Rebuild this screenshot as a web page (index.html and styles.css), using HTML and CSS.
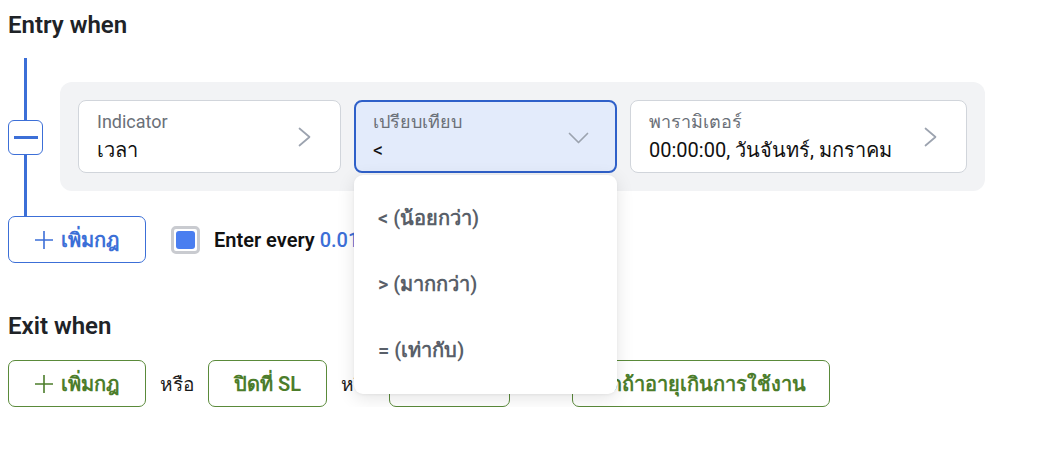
FILE: index.html
```html
<!DOCTYPE html>
<html lang="th">
<head>
<meta charset="utf-8">
<title>Rules</title>
<link rel="stylesheet" href="styles.css">
</head>
<body>
<div class="page">
  <h2 class="section-title">Entry when</h2>

  <div class="rule-group">
    <div class="rail">
      <span class="rail-line"></span>
      <button class="collapse-btn" type="button"><span class="dash"></span></button>
      <span class="rail-line"></span>
    </div>
    <div class="rule-panel">
      <div class="field field-indicator">
        <div class="field-text">
          <div class="field-label">Indicator</div>
          <div class="field-value">เวลา</div>
        </div>
        <svg class="chev-right" width="13" height="20" viewBox="0 0 13 20"><path d="M1.5 1.5 L11.5 10 L1.5 18.5" fill="none" stroke="#9ca3af" stroke-width="1.7" stroke-linecap="round" stroke-linejoin="round"/></svg>
      </div>

      <div class="field field-compare is-open">
        <div class="field-text">
          <div class="field-label">เปรียบเทียบ</div>
          <div class="field-value">&lt;</div>
        </div>
        <svg class="chev-down" width="21" height="12" viewBox="0 0 21 12"><path d="M1.5 1.5 L10.5 10.5 L19.5 1.5" fill="none" stroke="#9ca3af" stroke-width="1.7" stroke-linecap="round" stroke-linejoin="round"/></svg>
        <div class="dropdown">
          <div class="option">&lt; (น้อยกว่า)</div>
          <div class="option">&gt; (มากกว่า)</div>
          <div class="option">= (เท่ากับ)</div>
        </div>
      </div>

      <div class="field field-param">
        <div class="field-text">
          <div class="field-label">พารามิเตอร์</div>
          <div class="field-value">00:00:00, วันจันทร์, มกราคม</div>
        </div>
        <svg class="chev-right" width="13" height="20" viewBox="0 0 13 20"><path d="M1.5 1.5 L11.5 10 L1.5 18.5" fill="none" stroke="#9ca3af" stroke-width="1.7" stroke-linecap="round" stroke-linejoin="round"/></svg>
      </div>
    </div>
  </div>

  <div class="action-row">
    <button class="add-btn add-blue" type="button">
      <svg width="18" height="18" viewBox="0 0 18 18"><path d="M9 0 V18 M0 9 H18" stroke="currentColor" stroke-width="1.6" fill="none"/></svg>
      <span>เพิ่มกฎ</span>
    </button>
    <label class="check">
      <span class="check-box"><span class="check-fill"></span></span>
      <span class="check-text">Enter every <span class="num">0.01</span> s</span>
    </label>
  </div>

  <h2 class="section-title exit-title">Exit when</h2>

  <div class="action-row exit-row">
    <button class="add-btn add-green" type="button">
      <svg width="18" height="18" viewBox="0 0 18 18"><path d="M9 0 V18 M0 9 H18" stroke="currentColor" stroke-width="1.6" fill="none"/></svg>
      <span>เพิ่มกฎ</span>
    </button>
    <span class="or">หรือ</span>
    <button class="green-btn btn-sl" type="button">ปิดที่ SL</button>
    <span class="or">หรือ</span>
    <button class="green-btn btn-tp" type="button">ปิดที่ TP</button>
    <span class="or">หรือ</span>
    <button class="green-btn btn-age" type="button">ปิดถ้าอายุเกินการใช้งาน</button>
  </div>
</div>
</body>
</html>
```

FILE: styles.css
```css
* { box-sizing: border-box; }

html, body {
  margin: 0;
  padding: 0;
  background: #ffffff;
}

body {
  font-family: Roboto, "Noto Sans", "DejaVu Sans", sans-serif;
  color: #111827;
}

.page {
  padding: 11px 8px 0 8px;
  width: 1064px;
}

.section-title {
  margin: 0;
  font-size: 24px;
  line-height: 28px;
  font-weight: 600;
  color: #202327;
}

.rule-group {
  display: flex;
  margin-top: 19px;
}

.rail {
  width: 35px;
  display: flex;
  flex-direction: column;
  align-items: center;
}

.rail-line {
  flex: 1;
  width: 3px;
  background: #3c6fd7;
}

.collapse-btn {
  width: 35px;
  height: 35px;
  padding: 0;
  border: 1px solid #3c6fd7;
  border-radius: 6px;
  background: #ffffff;
  display: flex;
  align-items: center;
  justify-content: center;
}

.dash {
  width: 24px;
  height: 3px;
  background: #3c6fd7;
}

.rule-panel {
  margin: 24px 0 25px 17px;
  width: 925px;
  padding: 18px;
  background: #f2f3f5;
  border-radius: 12px;
  display: flex;
  gap: 13px;
}

.field {
  position: relative;
  height: 73px;
  border: 1px solid #d1d5db;
  border-radius: 8px;
  background: #ffffff;
  padding: 10px 29px 0 18px;
  display: flex;
  align-items: flex-start;
  justify-content: space-between;
}

.field-indicator { width: 263px; }
.field-compare { width: 263px; }
.field-param { width: 337px; }

.field-compare.is-open {
  border: 2px solid #2f60c9;
  background: #e3ebfb;
  padding: 9px 26px 0 17px;
}

.field-label {
  font-size: 18px;
  line-height: 22px;
  color: #6b7078;
  white-space: nowrap;
}

.field-value {
  margin-top: 3px;
  font-size: 20px;
  line-height: 28px;
  color: #111111;
  white-space: nowrap;
}

.chev-right {
  margin-top: 16px;
  flex: none;
}

.chev-down {
  margin-top: 21px;
  flex: none;
}

.dropdown {
  position: absolute;
  left: -2px;
  top: calc(100% + 4px);
  width: 263px;
  padding: 10px 0 11px;
  background: #ffffff;
  border-radius: 9px;
  box-shadow: 0 4px 18px rgba(0, 0, 0, 0.11), 0 1px 3px rgba(0, 0, 0, 0.05);
  z-index: 10;
}

.option {
  height: 66px;
  display: flex;
  align-items: center;
  padding-left: 24px;
  font-size: 20px;
  font-weight: 600;
  color: #595f69;
}

.action-row {
  display: flex;
  align-items: center;
}

.add-btn {
  width: 138px;
  height: 47px;
  border-radius: 7px;
  background: #ffffff;
  display: flex;
  align-items: center;
  padding: 0 0 0 26px;
  gap: 8px;
  font-family: inherit;
  font-size: 20px;
  font-weight: 600;
}

.add-blue {
  border: 1px solid #3c6fd7;
  color: #3c6fd7;
}

.add-green {
  border: 1px solid #5a8a3a;
  color: #4c7d2b;
}

.check {
  margin-left: 25px;
  display: flex;
  align-items: center;
  gap: 14px;
}

.check-box {
  width: 29px;
  height: 28px;
  border: 3px solid #c9cbd0;
  border-radius: 5px;
  display: flex;
  align-items: center;
  justify-content: center;
  background: #ffffff;
}

.check-fill {
  width: 19px;
  height: 18px;
  border-radius: 3px;
  background: #4a7ef0;
}

.check-text {
  font-size: 20px;
  font-weight: 600;
  color: #111111;
}

.num {
  color: #3c6fd7;
  font-weight: 500;
}

.exit-title {
  margin-top: 49px;
}

.exit-row {
  margin-top: 20px;
  gap: 14px;
}

.or {
  font-size: 19px;
  font-weight: 500;
  color: #1a1a1a;
}

.green-btn {
  height: 47px;
  border: 1px solid #5a8a3a;
  border-radius: 7px;
  background: #ffffff;
  color: #4c7d2b;
  font-family: inherit;
  font-size: 20px;
  font-weight: 600;
  padding: 0 20px;
  white-space: nowrap;
}

.btn-sl { width: 119px; }
.btn-tp { width: 121px; }
.btn-age { width: 258px; }
```
